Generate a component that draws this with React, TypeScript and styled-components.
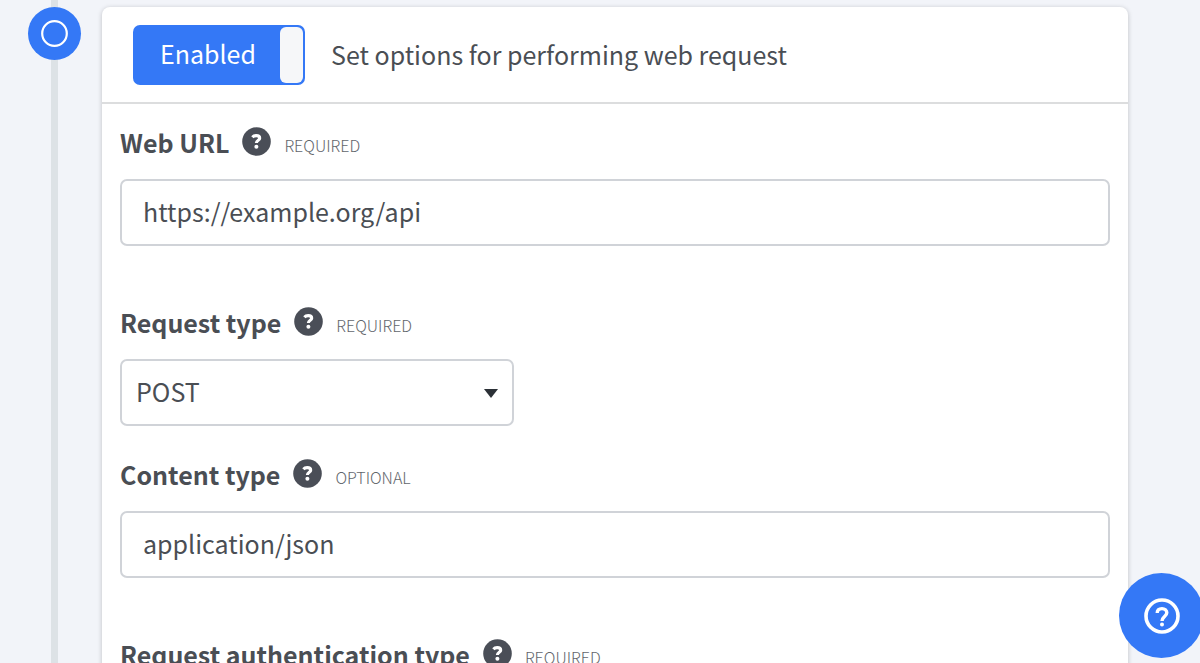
import React from "react";
import styled, { createGlobalStyle } from "styled-components";

const GlobalStyle = createGlobalStyle`
  *, *::before, *::after { box-sizing: border-box; }
  body {
    margin: 0;
    background: #f2f4f9;
    color: #4a4e54;
    font-family: "Source Sans Pro", "Noto Sans CJK SC", sans-serif;
    font-size: 25px;
    line-height: 38px;
  }
  button, input, select { font: inherit; color: inherit; }
`;

const Page = styled.main`
  display: flex;
  height: 100vh;
  overflow: hidden;
`;

const Timeline = styled.aside`
  display: flex;
  flex: none;
  justify-content: center;
  width: 53px;
  margin: 0 21px 0 28px;
  background: linear-gradient(#dde2e6, #dde2e6) center / 7px 100% no-repeat;
`;

const Step = styled.div`
  display: grid;
  place-items: center;
  width: 53px;
  height: 53px;
  margin-top: 7px;
  border-radius: 50%;
  background: #3478f6;
`;

const Card = styled.section`
  flex: 1;
  min-width: 0;
  height: max-content;
  margin: 7px 72px 40px 0;
  border-radius: 8px;
  background: #fff;
  box-shadow: 0 1px 5px rgba(0, 0, 0, 0.22);
`;

const CardHeader = styled.header`
  display: flex;
  align-items: center;
  gap: 26px;
  padding: 18px 31px 17px;
  border-bottom: 2px solid #dcddde;
`;

const Toggle = styled.button`
  display: flex;
  align-items: stretch;
  justify-content: space-between;
  width: 172px;
  height: 60px;
  padding: 2px 2px 2px 27px;
  border: 0;
  border-radius: 7px;
  background: #3478f6;
  color: #fff;
  line-height: 53px;
`;

const Knob = styled.span`
  width: 23px;
  border-radius: 6px;
  background: #f6f7f9;
`;

const Title = styled.h1`
  margin: 0;
  padding-bottom: 2px;
  font-size: 25px;
  font-weight: 400;
`;

const Form = styled.form`
  padding: 19px 18px;
`;

const Field = styled.div<{ $compact?: boolean }>`
  margin-bottom: ${(p) => (p.$compact ? 29 : 57)}px;
`;

const LabelRow = styled.div`
  display: flex;
  align-items: center;
  height: 38px;
  margin-bottom: 18px;
`;

const Label = styled.label`
  font-weight: 700;
`;

const HelpButton = styled.button`
  display: flex;
  margin: 0 13px 2px;
  padding: 0;
  border: 0;
  background: none;
`;

const Hint = styled.span`
  padding-top: 6px;
  color: #62666c;
  font-size: 16px;
  font-weight: 300;
  text-transform: uppercase;
`;

const TextInput = styled.input`
  display: block;
  width: 100%;
  height: 67px;
  padding: 0 21px 4px;
  border: 2px solid #d0d3d8;
  border-radius: 7px;
  background: #fff;
`;

const SelectBox = styled.div`
  display: grid;
  align-items: center;
  width: 40%;
  max-width: 394px;
  > * { grid-area: 1 / 1; }
  > svg {
    justify-self: end;
    margin-right: 16px;
    pointer-events: none;
  }
`;

const Select = styled.select`
  width: 100%;
  height: 67px;
  padding: 0 14px 4px;
  appearance: none;
  border: 2px solid #d0d3d8;
  border-radius: 7px;
  background: #fff;
`;

const ChatButton = styled.button`
  position: fixed;
  right: -4px;
  bottom: 5px;
  display: grid;
  place-items: center;
  width: 85px;
  height: 85px;
  padding: 0;
  border: 0;
  border-radius: 50%;
  background: #3478f6;
`;

function HelpIcon() {
  return (
    <svg width="29" height="29" viewBox="0 0 29 29" fill="none" aria-hidden="true">
      <circle cx="14.5" cy="14.5" r="14.3" fill="#4a4e57" />
      <path d="M10.4 10.2C11.3 9.1 12.6 8.600 14.200 8.600c2.200 0 3.500 1 3.500 2.600 0 2.200-3.300 2-3.300 4.900" stroke="#fff" strokeWidth="3.100" />
      <circle cx="14.400" cy="19.700" r="2" fill="#fff" />
    </svg>
  );
}

function FieldLabel({ id, text, hint }: { id: string; text: string; hint: string }) {
  return (
    <LabelRow>
      <Label htmlFor={id}>{text}</Label>
      <HelpButton type="button" aria-label={`Help for ${text}`}>
        <HelpIcon />
      </HelpButton>
      <Hint>{hint}</Hint>
    </LabelRow>
  );
}

function SelectField({ id, options }: { id: string; options: string[] }) {
  return (
    <SelectBox>
      <Select id={id}>
        {options.map((o) => (
          <option key={o}>{o}</option>
        ))}
      </Select>
      <svg width="14" height="10" viewBox="0 0 14 10" aria-hidden="true">
        <path d="M0 1h14L7 10z" fill="#2b3036" />
      </svg>
    </SelectBox>
  );
}

export default function App() {
  const [enabled, setEnabled] = React.useState(true);
  return (
    <>
      <GlobalStyle />
      <Page>
        <Timeline>
          <Step>
            <svg width="27" height="27" viewBox="0 0 27 27" fill="none" aria-hidden="true">
              <circle cx="13.5" cy="13.5" r="12.3" stroke="#fff" strokeWidth="2.2" />
            </svg>
          </Step>
        </Timeline>
        <Card>
          <CardHeader>
            <Toggle type="button" aria-pressed={enabled} onClick={() => setEnabled(!enabled)}>
              {enabled ? "Enabled" : "Disabled"}
              <Knob />
            </Toggle>
            <Title>Set options for performing web request</Title>
          </CardHeader>
          <Form>
            <Field>
              <FieldLabel id="url" text="Web URL" hint="Required" />
              <TextInput id="url" defaultValue="https://example.org/api" />
            </Field>
            <Field $compact>
              <FieldLabel id="method" text="Request type" hint="Required" />
              <SelectField id="method" options={["POST", "GET"]} />
            </Field>
            <Field>
              <FieldLabel id="content" text="Content type" hint="Optional" />
              <TextInput id="content" defaultValue="application/json" />
            </Field>
            <Field>
              <FieldLabel id="auth" text="Request authentication type" hint="Required" />
              <SelectField id="auth" options={["None"]} />
            </Field>
          </Form>
        </Card>
      </Page>
      <ChatButton type="button" aria-label="Open help">
        <svg width="36" height="36" viewBox="0 0 36 36" fill="none" aria-hidden="true">
          <circle cx="18" cy="18" r="16" stroke="#fff" strokeWidth="3.6" />
          <path d="M13.200 15c0-2.800 2-4.400 4.800-4.400s4.800 1.700 4.800 4.200c0 3.600-4.800 4-4.800 8.200" stroke="#fff" strokeWidth="3.400" />
          <circle cx="18" cy="26.400" r="2" fill="#fff" />
        </svg>
      </ChatButton>
    </>
  );
}
